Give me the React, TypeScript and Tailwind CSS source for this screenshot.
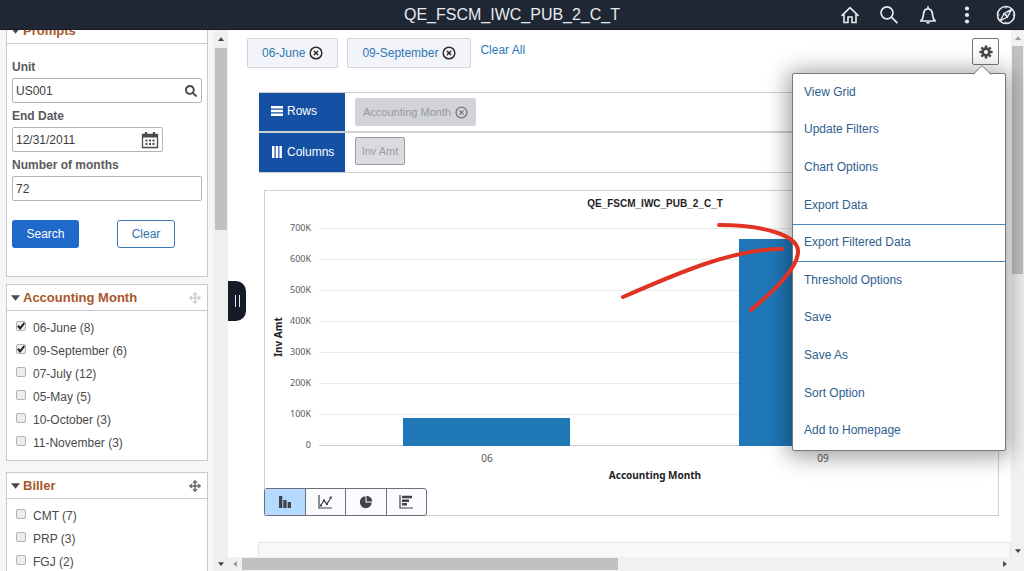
import * as React from "react";
import { CircleX, Move } from "lucide-react";
import { FaSearch } from "react-icons/fa";
import { clsx } from "clsx";

const months = [
  { label: "06-June (8)", checked: true },
  { label: "09-September (6)", checked: true },
  { label: "07-July (12)", checked: false },
  { label: "05-May (5)", checked: false },
  { label: "10-October (3)", checked: false },
  { label: "11-November (3)", checked: false },
];

const billers = [
  { label: "CMT (7)", checked: false },
  { label: "PRP (3)", checked: false },
  { label: "FGJ (2)", checked: false },
];

const menuItems = [
  "View Grid",
  "Update Filters",
  "Chart Options",
  "Export Data",
  "Export Filtered Data",
  "Threshold Options",
  "Save",
  "Save As",
  "Sort Option",
  "Add to Homepage",
];

const ticks = ["700K", "600K", "500K", "400K", "300K", "200K", "100K", "0"];

function Header() {
  return (
    <header className="grid h-[30px] shrink-0 grid-cols-[1fr_auto_1fr] items-center border-b border-[#151b27] bg-[#1f2735] text-[#e8eaee]">
      <span />
      <h1 className="text-base leading-none">QE_FSCM_IWC_PUB_2_C_T</h1>
      <nav className="flex items-center justify-end gap-[19px] pr-2">
        <button aria-label="Home">
          <svg viewBox="0 0 20 20" className="size-5" fill="none" stroke="currentColor" strokeWidth="1.6">
            <path d="M1.5 10.8 10 2.6l8.5 8.2M4 8.8v8.7h4V12h4v5.5h4V8.8" />
          </svg>
        </button>
        <button aria-label="Search">
          <svg viewBox="0 0 20 20" className="size-5" fill="none" stroke="currentColor" strokeWidth="1.7">
            <circle cx="8" cy="7.8" r="6" />
            <path d="m12.4 12.2 6 6" />
          </svg>
        </button>
        <button aria-label="Notifications">
          <svg viewBox="0 0 20 20" className="size-5" fill="none" stroke="currentColor" strokeWidth="1.7" strokeLinejoin="round">
            <path d="M2.8 16c1.9-1.7 2.500-3.300 2.700-6.500C5.700 6 7 3.800 10 3.800s4.300 2.200 4.500 5.700c.2 3.200.8 4.800 2.700 6.500z" />
            <path d="M10 3.8V1.3" />
            <path d="M8 17.3h4l-2 1.5z" fill="currentColor" strokeWidth=".5" />
          </svg>
        </button>
        <button aria-label="Actions">
          <svg viewBox="0 0 20 20" className="size-5" fill="currentColor">
            <circle cx="10" cy="3.5" r="2.1" />
            <circle cx="10" cy="10" r="2.1" />
            <circle cx="10" cy="16.5" r="2.1" />
          </svg>
        </button>
        <button aria-label="NavBar">
          <svg viewBox="0 0 20 20" className="size-5" fill="none" stroke="currentColor" strokeWidth="1.6">
            <circle cx="10" cy="10" r="8.5" />
            <path d="M15.6 4.4 8 8.5l3.5 3.5z" fill="currentColor" fillOpacity=".25" strokeWidth="1.3" strokeLinejoin="round" />
            <path d="M4.4 15.6 8 8.5l3.5 3.5z" strokeWidth="1.3" strokeLinejoin="round" />
            <path d="M10 1.5v2M10 16.5v2M1.5 10h2M16.5 10h2" strokeWidth="1" />
          </svg>
        </button>
      </nav>
    </header>
  );
}

function Caret({ className }: { className: string }) {
  return (
    <svg viewBox="0 0 8 5" className={className} fill="currentColor">
      <path d="M0 0h8L4 5z" />
    </svg>
  );
}

// eight-toothed cog, drawn as a ring with a spoke for each tooth
function Cog({ className }: { className: string }) {
  return (
    <svg viewBox="0 0 14 14" className={className} fill="none" stroke="currentColor">
      <circle cx="7" cy="7" r="3.4" strokeWidth="2.6" />
      {[0, 45, 90, 135, 180, 225, 270, 315].map((angle) => (
        <path key={angle} d="M7 .4v2.6" strokeWidth="2.5" transform={`rotate(${angle} 7 7)`} />
      ))}
    </svg>
  );
}

type PanelProps = {
  title: string;
  className?: string;
  moveClass?: string;
  children: React.ReactNode;
};

function Panel({ title, className, moveClass, children }: PanelProps) {
  return (
    <section className={clsx("border border-[#c9c9cc] bg-white", className)}>
      <h2 className="flex h-[26px] items-center border-b border-[#c9c9cc] px-1 text-[13px] font-bold text-[#a9562a]">
        <Caret className="mr-[3px] h-[6px] w-[9px] text-[#4a4a4a]" />
        {title}
        {moveClass && <Move className={clsx("mr-[2px] ml-auto size-3", moveClass)} strokeWidth={3} />}
      </h2>
      {children}
    </section>
  );
}

function CheckList({ items }: { items: typeof months }) {
  return (
    <ul className="pt-[5px] pb-[6px]">
      {items.map((item) => (
        <li key={item.label}>
          <label className="flex h-[23px] items-center pl-[9px] text-xs text-[#4a4a4a]">
            <span className="mr-[7px] mb-1 grid size-[10px]">
              <input
                type="checkbox"
                defaultChecked={item.checked}
                className="peer col-start-1 row-start-1 size-[10px] appearance-none rounded-xs border border-[#b2b2b5] bg-[#ededee]"
              />
              <svg viewBox="0 0 9 9" className="col-start-1 row-start-1 hidden size-[10px] peer-checked:block" fill="none" stroke="#222" strokeWidth="1.8">
                <path d="m1.7 4.3 2 2.3 3.8-4.8" />
              </svg>
            </span>
            {item.label}
          </label>
        </li>
      ))}
    </ul>
  );
}

function Sidebar() {
  const label = "block h-6 text-xs leading-[26px] font-bold text-[#5a5a5d]";
  const field = "flex h-[25px] items-center rounded-xs border border-[#b4b4b8] bg-white px-[3px]";
  const input = "w-full min-w-0 text-xs text-[#3c3c3e] outline-none";
  return (
    <aside className="flex w-[228px] shrink-0 bg-[#f6f6f8]">
      <div className="min-w-0 flex-1 overflow-hidden pr-[5px] pl-[6px]">
        {/* list is scrolled, so the first heading is cut by the header bar */}
        <Panel title="Prompts" className="-mt-[13px] mb-[7px]">
          <form className="px-[5px] pt-[10px] pb-7" onSubmit={(e) => e.preventDefault()}>
            <label htmlFor="unit" className={label}>Unit</label>
            <div className={field}>
              <input id="unit" className={input} defaultValue="US001" />
              <button type="button" aria-label="Look up unit" className="pr-px">
                <FaSearch className="size-3 text-[#4a4a4a]" />
              </button>
            </div>
            <label htmlFor="end-date" className={label}>End Date</label>
            <div className={clsx(field, "w-[151px]")}>
              <input id="end-date" className={input} defaultValue="12/31/2011" />
              <button type="button" aria-label="Choose date">
                <svg viewBox="0 0 18 18" className="size-[18px]" fill="none" stroke="#4a4a4a">
                  <path d="M1.5 3.5h15v13h-15z" strokeWidth="1.3" />
                  <path d="M1.5 5h15" strokeWidth="3" />
                  <path d="M5 1v4M13 1v4" strokeWidth="2.2" />
                  <path d="M4.5 9.5h9M4.5 13h9" strokeWidth="2" strokeDasharray="2 1.5" />
                </svg>
              </button>
            </div>
            <label htmlFor="months" className={label}>Number of months</label>
            <div className={field}>
              <input id="months" className={input} defaultValue="72" />
            </div>
            <div className="mt-[19px] flex gap-[38px]">
              <button className="h-7 w-[67px] rounded-[3px] bg-[#1f69cb] text-xs text-white">Search</button>
              <button type="reset" className="h-7 w-[58px] rounded-[3px] border border-[#3b78b5] bg-white text-xs text-[#2f73b0]">Clear</button>
            </div>
          </form>
        </Panel>
        <Panel title="Accounting Month" className="mb-[11px]" moveClass="text-[#cfcfd2]">
          <CheckList items={months} />
        </Panel>
        <Panel title="Biller" moveClass="text-[#6b6b6e]">
          <CheckList items={billers} />
        </Panel>
      </div>
      <div className="flex w-[15px] flex-col items-center bg-[#f0f0f1] text-[#444]">
        <Caret className="my-[7px] h-1 w-[6px] shrink-0 rotate-180" />
        <div className="h-[182px] w-3 shrink-0 bg-[#c1c1c3]" />
        <Caret className="mt-auto mb-[5px] h-1 w-[6px] shrink-0" />
      </div>
    </aside>
  );
}

function Chip({ label }: { label: string }) {
  return (
    <button className="flex h-[30px] items-center gap-1 rounded-xs border border-[#d3d3da] bg-[#f3f4f9] px-[14px] text-xs text-[#2c79b5]">
      {label}
      <CircleX className="size-[14px] text-[#2b2b2d]" strokeWidth={2.5} />
    </button>
  );
}

function PivotArea() {
  const head = "flex w-[86px] shrink-0 items-center gap-1 bg-[#1450a4] pb-[2px] pl-3 text-xs text-white";
  return (
    <div className="mt-[24px] ml-[31px] border-y border-[#d0d0d2]">
      <div className="flex h-10 border-b-2 border-[#d0d0d2]">
        <div className={head}>
          <svg viewBox="0 0 12 10" className="h-[10px] w-3" fill="currentColor">
            <path d="M0 0h12v2.5H0zM0 3.7h12v2.5H0zM0 7.4h12v2.5H0z" />
          </svg>
          Rows
        </div>
        <button className="mt-[5px] ml-[10px] flex h-7 items-center gap-1 rounded-xs bg-[#d2d3d8] px-2 text-[11px] text-[#96979d]">
          Accounting Month
          <CircleX className="size-[13px] text-[#77787d]" strokeWidth={2.5} />
        </button>
      </div>
      <div className="flex h-[39px]">
        <div className={head}>
          <svg viewBox="0 0 12 12" className="size-3" fill="currentColor">
            <path d="M1 0h2.5v12H1zM4.700 0h2.500v12H4.700zM8.400 0h2.500v12H8.400z" />
          </svg>
          Columns
        </div>
        <button className="mt-1 ml-[10px] flex h-7 w-[50px] items-center justify-center rounded-xs border border-[#9b9ca2] bg-[#dadbe0] text-[11px] text-[#9c9da3]">
          Inv Amt
        </button>
      </div>
    </div>
  );
}

function Chart() {
  return (
    <svg viewBox="0 0 733 297" className="block w-full" role="img" aria-label="Inv Amt by Accounting Month">
      <text x="390" y="16" textAnchor="middle" fontSize="10" fontWeight="700" fill="#1e1e1e" className="font-['Liberation_Sans',sans-serif]">
        QE_FSCM_IWC_PUB_2_C_T
      </text>
      <g className="font-['Noto_Sans',sans-serif]" fontSize="9" fill="#5a5a5a">
        {ticks.map((tick, i) => (
          <g key={tick}>
            <path d={`M54 ${37.5 + i * 31}H723`} stroke={tick === "0" ? "#cfcfcf" : "#ebebeb"} />
            <text x="46" y={40 + i * 31} textAnchor="end">{tick}</text>
          </g>
        ))}
        <path d="M138 227h167v28H138zM474 48h167v207H474z" fill="#1f77b8" />
        <text x="222" y="271" textAnchor="middle" fontSize="10">06</text>
        <text x="558" y="271" textAnchor="middle" fontSize="10">09</text>
      </g>
      <g className="font-['Noto_Sans',sans-serif]" fontSize="10" fontWeight="700" fill="#1e1e1e">
        <text x="390" y="288" textAnchor="middle">Accounting Month</text>
        <text transform="translate(17 146) rotate(-90)" textAnchor="middle">Inv Amt</text>
      </g>
    </svg>
  );
}

const chartTypes = [
  { name: "Bar chart", icon: <path d="M1 1h3.3v12H1zM5.3 5h3.3v8H5.300zM9.700 7H13v6H9.700z" fill="currentColor" stroke="none" /> },
  {
    name: "Line chart",
    icon: (
      <>
        <path d="M1 0v13h13" />
        <path d="m2.5 11 3.5-5.5L9 9l4-6.5" />
        <path d="M11 2.5 13.5 1l.3 3zM5 4.500h2v2H5zM8 8h2v2H8zM2 9.500h2v2H2z" fill="currentColor" stroke="none" />
      </>
    ),
  },
  {
    name: "Pie chart",
    icon: (
      <>
        <path d="M6.500 1.200a6 6 0 1 0 6.300 6.300H6.500z" fill="currentColor" stroke="none" />
        <path d="M7.500.8v5.700h5.700A5.700 5.700 0 0 0 7.500.8z" fill="currentColor" stroke="none" />
      </>
    ),
  },
  {
    name: "Horizontal bar chart",
    icon: (
      <>
        <path d="M1 0v13h13" />
        <path d="M3 .8h10v2.5H3zM3 4.4h7v2.5H3zM3 8h5v2.5H3z" fill="currentColor" stroke="none" />
      </>
    ),
  },
];

function ChartToolbar() {
  return (
    <div className="-mb-px -ml-px flex h-7 w-[163px] divide-x divide-[#6e6f78] overflow-hidden rounded-[3px] border border-[#6e6f78] bg-[#fbfbff]">
      {chartTypes.map((type, i) => (
        <button
          key={type.name}
          aria-label={type.name}
          className={clsx("flex flex-1 items-center justify-center text-[#414247]", i === 0 && "bg-[#b5daff]")}
        >
          <svg viewBox="0 0 14 14" className="size-[14px]" fill="none" stroke="currentColor" strokeWidth="1.2">
            {type.icon}
          </svg>
        </button>
      ))}
    </div>
  );
}

function OptionsMenu() {
  return (
    <div className="absolute top-[43px] right-[18px] w-[214px] rounded-xs border border-[#77787c] bg-white shadow-[0_2px_22px_4px_rgba(0,0,0,0.38)]">
      <svg viewBox="0 0 18 10" className="absolute -top-[9px] right-[14px] h-[10px] w-[18px]" fill="white" stroke="#77787c">
        <path d="M0 9.5 9 .7l9 8.8" />
        <path d="M1 10h16" stroke="white" strokeWidth="2" />
      </svg>
      <ul className="grid h-[376px] auto-rows-fr">
        {menuItems.map((item) => (
          <li key={item} className="flex">
            <button
              className={clsx(
                "w-full border-y pb-[2px] pl-[11px] text-left text-xs text-[#2f608f]",
                item === "Export Filtered Data" ? "border-[#4f86b8]" : "border-transparent"
              )}
            >
              {item}
            </button>
          </li>
        ))}
      </ul>
    </div>
  );
}

export default function App() {
  return (
    <div className="flex h-screen flex-col overflow-hidden bg-white font-['Liberation_Sans',Arial,sans-serif]">
      <Header />
      <div className="flex min-h-0 flex-1">
        <Sidebar />
        <main className="relative flex min-w-0 flex-1 flex-col">
          <div className="flex min-h-0 flex-1">
            <div className="min-w-0 flex-1 overflow-hidden pt-2 pr-3">
              <div className="flex items-start pl-[19px]">
                <div className="flex gap-[9px]">
                  <Chip label="06-June" />
                  <Chip label="09-September" />
                </div>
                <a href="#clear" className="ml-[9px] text-xs leading-6 text-[#2c79b5]">Clear All</a>
                <button aria-label="Options" className="ml-auto flex h-[27px] w-[27px] items-center justify-center rounded-xs border border-[#77787c] bg-white">
                  <Cog className="size-[14px] text-[#4a4a4c]" />
                </button>
              </div>
              <PivotArea />
              <div className="mt-[17px] ml-9 border border-[#d0d0d2]">
                <Chart />
                <ChartToolbar />
              </div>
              <div className="-mr-3 mt-[26px] ml-[30px] h-10 border border-[#e6e6e6] bg-[#f8f8f8]" />
            </div>
            <div className="flex w-[13px] flex-col items-center bg-[#f1f1f2]">
              <Caret className="my-[6px] h-1 w-[6px] shrink-0 rotate-180 text-[#9a9a9c]" />
              <div className="h-[228px] w-[11px] shrink-0 bg-[#c1c1c3]" />
              <Caret className="mt-auto mb-1 h-1 w-[6px] shrink-0 text-[#444]" />
            </div>
          </div>
          <div className="flex h-[14px] shrink-0 items-center bg-[#f1f1f2]">
            <Caret className="mx-1 h-1 w-[6px] rotate-90 text-[#9a9a9c]" />
            <div className="h-3 w-1/2 max-w-[376px] bg-[#c1c1c3]" />
            <Caret className="mr-4 ml-auto h-1 w-[6px] -rotate-90 text-[#444]" />
          </div>

          <button aria-label="Collapse filters" className="absolute top-[251px] left-0 flex h-10 w-[18px] items-center justify-center gap-[3px] rounded-r-[10px] bg-[#151b27]">
            <span className="h-3 w-px bg-[#e5e7ec]" />
            <span className="h-3 w-px bg-[#e5e7ec]" />
          </button>
          <OptionsMenu />
          {/* hand-drawn pointer towards the highlighted menu item */}
          <svg viewBox="0 0 185 97" className="pointer-events-none absolute top-[189px] right-[221px] h-[97px] w-[185px]" fill="none" stroke="#e03324" strokeWidth="4" strokeLinecap="round">
            <path d="M101 6C145 6 182 16 180 34C178 52 152 75 133 91" />
            <path d="M5 78C60 54 115 30 164 30" />
          </svg>
        </main>
      </div>
    </div>
  );
}
